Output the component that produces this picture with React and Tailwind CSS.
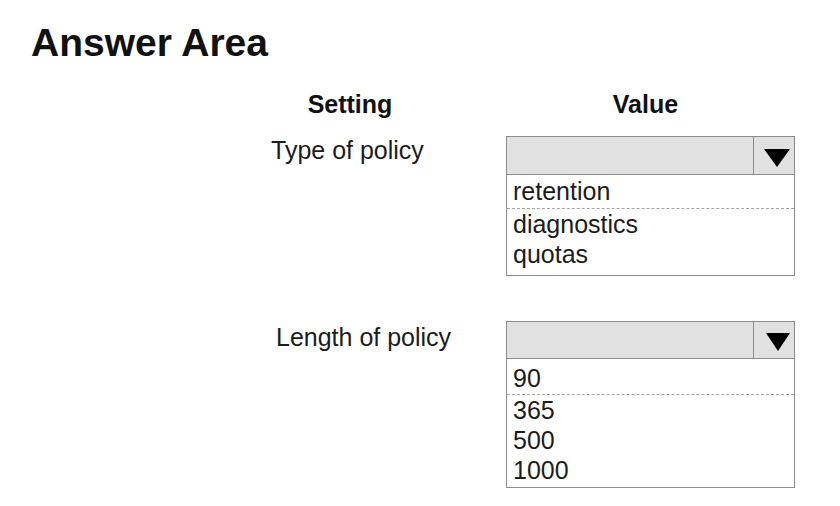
const Arrow = ({ w }) => (
  <svg width={w} height="18" viewBox={`0 0 ${w} 18`}>
    <polygon points={`0,0 ${w},0 ${w / 2},18`} fill="#000" />
  </svg>
);

const DropBox = ({ headH, arrowW, first, rest, firstPad, restPad }) => (
  <div className="w-[289px] border border-[#8c8c8c] bg-white">
    <div
      className={`flex border-b border-[#8c8c8c] bg-[#e1e1e1] ${headH}`}
    >
      <div className="flex-1" />
      <div className="flex w-[41px] items-end justify-end border-l border-[#8c8c8c] pr-[4px] pb-[7px]">
        <Arrow w={arrowW} />
      </div>
    </div>
    <div className={`border-b border-dashed border-[#a5a5a5] pl-[6px] leading-[30px] ${firstPad}`}>
      {first}
    </div>
    <div className={`pl-[6px] leading-[30px] ${restPad}`}>
      {rest.map((r) => (
        <div key={r}>{r}</div>
      ))}
    </div>
  </div>
);

export default function App() {
  return (
    <div className="h-[506px] w-[840px] bg-white text-[#1c1c1c] font-['Liberation_Sans',Arial,sans-serif]">
      <h1 className="pl-[31px] pt-[23px] text-[39px] font-bold leading-[39px] text-[#111]">
        Answer Area
      </h1>

      {/* column headers */}
      <div className="mt-[30px] flex text-[25px] font-bold leading-[25px] text-[#111]">
        <div className="ml-[250px] w-[200px] text-center">Setting</div>
        <div className="ml-[56px] w-[289px] pr-[10px] text-center">Value</div>
      </div>

      {/* type of policy */}
      <div className="mt-[19px] flex items-start text-[25px]">
        <div className="w-[506px] pl-[271px] pt-[2px] leading-[25px]">Type of policy</div>
        <DropBox
          headH="h-[38px]"
          arrowW={26}
          first="retention"
          rest={["diagnostics", "quotas"]}
          firstPad="pt-[1px] pb-[2px]"
          restPad="pb-[6px]"
        />
      </div>

      {/* length of policy */}
      <div className="mt-[45px] flex items-start text-[25px]">
        <div className="w-[506px] pl-[276px] pt-[4px] leading-[25px]">Length of policy</div>
        <DropBox
          headH="h-[37px]"
          arrowW={24}
          first="90"
          rest={["365", "500", "1000"]}
          firstPad="pt-[4px] pb-[1px]"
          restPad="pb-[2px]"
        />
      </div>
    </div>
  );
}
